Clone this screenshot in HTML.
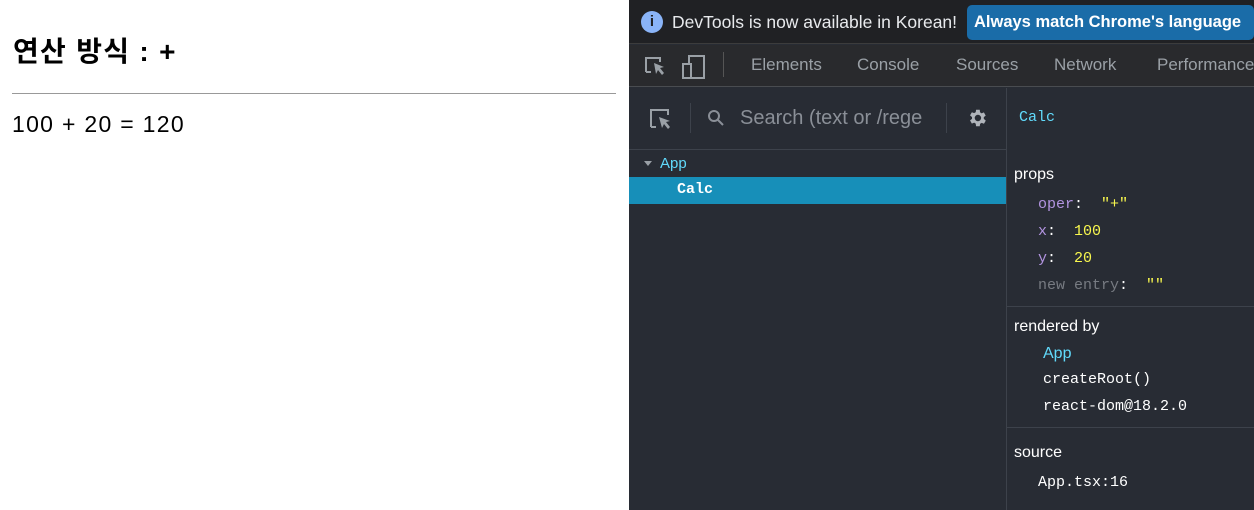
<!DOCTYPE html>
<html><head><meta charset="utf-8"><style>
*{margin:0;padding:0;box-sizing:border-box}
body{width:1254px;height:510px;overflow:hidden;position:relative;background:#fff;font-family:"Liberation Sans","Noto Sans CJK KR",sans-serif}
.abs{position:absolute;white-space:nowrap}
.mono{font-family:"Liberation Mono",monospace;font-size:15px}
.seg{font-family:"Liberation Sans",sans-serif}
.tab{position:absolute;top:55px;font-size:17px;color:#9aa0a6;font-family:"Liberation Sans",sans-serif}
</style></head><body>
<div class="abs" style="left:13px;top:30px;font-size:28px;font-weight:bold;color:#000;letter-spacing:1.3px">연산 방식 : +</div>
<div class="abs" style="left:12px;top:93px;width:604px;height:1px;background:#999"></div>
<div class="abs" style="left:12px;top:111px;font-size:23px;color:#000;letter-spacing:1.3px">100 + 20 = 120</div>

<div class="abs" style="left:629px;top:0;width:625px;height:510px;background:#282c34"></div>
<!-- infobar -->
<div class="abs" style="left:629px;top:0;width:625px;height:44px;background:#202124;border-bottom:1px solid #3c3c3c"></div>
<div class="abs" style="left:641px;top:11px;width:22px;height:22px;border-radius:50%;background:#8ab4f8;color:#202124;font-weight:bold;font-size:15px;text-align:center;line-height:22px">i</div>
<div class="abs seg" style="left:672px;top:12px;font-size:17.5px;color:#e8eaed">DevTools is now available in Korean!</div>
<div class="abs seg" style="left:967px;top:5px;width:287px;height:35px;border-radius:5px;background:#1a6ca8;color:#fff;font-weight:bold;font-size:16.5px;line-height:35px;padding-left:7px;overflow:hidden">Always match Chrome's language</div>
<!-- tabs -->
<div class="abs" style="left:629px;top:45px;width:625px;height:42px;background:#292a2d;border-bottom:1px solid #494c50"></div>
<svg class="abs" style="left:643px;top:54px" width="70" height="26" viewBox="0 0 70 26"><path d="M3 18V4h14v4" fill="none" stroke="#9aa0a6" stroke-width="2"/><path d="M3 18h5" stroke="#9aa0a6" stroke-width="2"/><path d="M11 9l10 4-4 1 4 5-2 2-4-5-2 4z" fill="#9aa0a6"/><rect x="46" y="2" width="15" height="22" fill="none" stroke="#9aa0a6" stroke-width="2"/><rect x="40" y="10" width="8" height="14" fill="#292a2d" stroke="#9aa0a6" stroke-width="2"/></svg>
<div class="abs" style="left:723px;top:52px;width:1px;height:25px;background:#555"></div>
<div class="tab" style="left:751px">Elements</div>
<div class="tab" style="left:857px">Console</div>
<div class="tab" style="left:956px">Sources</div>
<div class="tab" style="left:1054px">Network</div>
<div class="tab" style="left:1157px">Performance</div>
<!-- react toolbar -->
<div class="abs" style="left:629px;top:149px;width:378px;height:1px;background:#3d424b"></div>
<div class="abs" style="left:1006px;top:88px;width:1px;height:422px;background:#3d424b"></div>
<svg class="abs" style="left:648px;top:107px" width="26" height="26" viewBox="0 0 26 26"><path d="M3 20V3h17v5" fill="none" stroke="#9aa0a6" stroke-width="2"/><path d="M3 20h5" stroke="#9aa0a6" stroke-width="2"/><path d="M11 10l11 4-4 1 4 5-2 2-4-5-2 4z" fill="#9aa0a6"/></svg>
<div class="abs" style="left:690px;top:103px;width:1px;height:30px;background:#3d424b"></div>
<svg class="abs" style="left:707px;top:109px" width="18" height="18" viewBox="0 0 18 18"><circle cx="7" cy="7" r="5" fill="none" stroke="#8a8f97" stroke-width="2"/><path d="M11 11l5 5" stroke="#8a8f97" stroke-width="2"/></svg>
<div class="abs seg" style="left:740px;top:107px;font-size:20px;color:#8a8f97">Search (text or /rege</div>
<div class="abs" style="left:946px;top:103px;width:1px;height:30px;background:#3d424b"></div>
<svg class="abs" style="left:966px;top:107px" width="22" height="22" viewBox="0 0 24 24"><path fill="#b0b4ba" d="M19.4 13a7.5 7.5 0 000-2l2.1-1.6-2-3.5-2.5 1a7 7 0 00-1.7-1L15 3h-4l-.4 2.7a7 7 0 00-1.7 1l-2.5-1-2 3.5L6.6 11a7.5 7.5 0 000 2l-2.2 1.6 2 3.5 2.5-1a7 7 0 001.7 1L11 21h4l.4-2.7a7 7 0 001.7-1l2.5 1 2-3.5zM13 15.5A3.5 3.5 0 1113 8.5a3.5 3.5 0 010 7z"/></svg>
<div class="abs mono" style="left:1019px;top:109px;color:#61dafb">Calc</div>
<!-- tree -->
<div class="abs" style="left:644px;top:161px;width:0;height:0;border-left:4px solid transparent;border-right:4px solid transparent;border-top:5px solid #9aa0a6"></div>
<div class="abs seg" style="left:660px;top:155px;font-size:15px;color:#61dafb">App</div>
<div class="abs" style="left:629px;top:177px;width:377px;height:27px;background:#178fb9"></div>
<div class="abs mono" style="left:677px;top:181px;color:#fff;font-weight:bold">Calc</div>
<!-- right pane -->
<div class="abs seg" style="left:1014px;top:166px;font-size:16px;color:#fff">props</div>
<div class="abs mono" style="left:1038px;top:196px;color:#b294e0">oper<span style="color:#fff">:</span>&nbsp; <span style="color:#f8f74e">"+"</span></div>
<div class="abs mono" style="left:1038px;top:223px;color:#b294e0">x<span style="color:#fff">:</span>&nbsp; <span style="color:#f8f74e">100</span></div>
<div class="abs mono" style="left:1038px;top:250px;color:#b294e0">y<span style="color:#fff">:</span>&nbsp; <span style="color:#f8f74e">20</span></div>
<div class="abs mono" style="left:1038px;top:277px;color:#777b82">new entry<span style="color:#fff">:</span>&nbsp; <span style="color:#f8f74e">""</span></div>
<div class="abs" style="left:1007px;top:306px;width:247px;height:1px;background:#3d424b"></div>
<div class="abs seg" style="left:1014px;top:318px;font-size:16px;color:#fff">rendered by</div>
<div class="abs seg" style="left:1043px;top:345px;font-size:16px;color:#61dafb">App</div>
<div class="abs mono" style="left:1043px;top:371px;color:#fff">createRoot()</div>
<div class="abs mono" style="left:1043px;top:398px;color:#fff">react-dom@18.2.0</div>
<div class="abs" style="left:1007px;top:427px;width:247px;height:1px;background:#3d424b"></div>
<div class="abs seg" style="left:1014px;top:444px;font-size:16px;color:#fff">source</div>
<div class="abs mono" style="left:1038px;top:474px;color:#fff">App.tsx:16</div>
</body></html>
